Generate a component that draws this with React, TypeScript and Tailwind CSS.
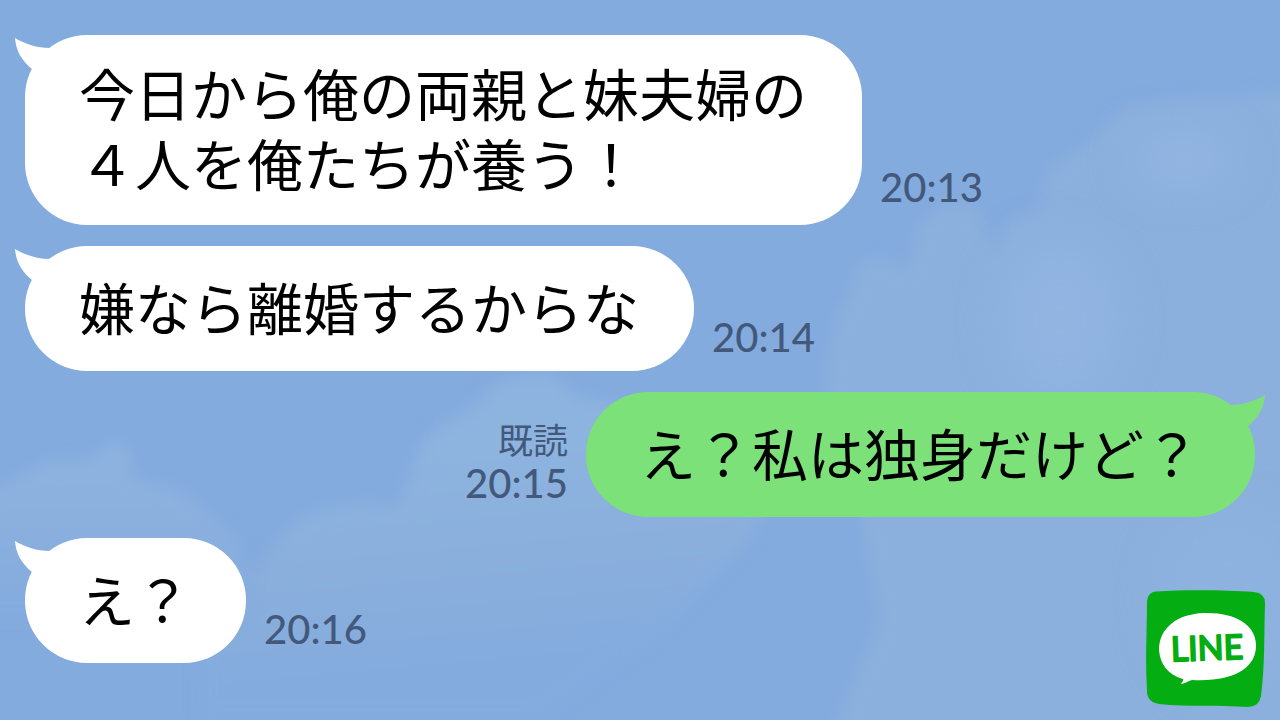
type Side = "in" | "out";

interface Message {
  id: number;
  side: Side;
  text: string;
  time: string;
  read?: boolean;
}

const messages: Message[] = [
  { id: 1, side: "in", text: "今日から俺の両親と妹夫婦の\n４人を俺たちが養う！", time: "20:13" },
  { id: 2, side: "in", text: "嫌なら離婚するからな", time: "20:14" },
  { id: 3, side: "out", text: "え？私は独身だけど？", time: "20:15", read: true },
  { id: 4, side: "in", text: "え？", time: "20:16" },
];

function Sky() {
  return (
    <svg
      className="absolute inset-0 h-full w-full"
      viewBox="0 0 1280 720"
      preserveAspectRatio="xMidYMid slice"
      aria-hidden="true"
    >
      <defs>
        <filter id="soft" x="-10%" y="-10%" width="120%" height="120%" colorInterpolationFilters="sRGB">
          <feGaussianBlur stdDeviation="8" />
        </filter>
        <filter id="haze" x="-80%" y="-80%" width="260%" height="260%" colorInterpolationFilters="sRGB">
          <feGaussianBlur stdDeviation="22" />
        </filter>
        <linearGradient id="leftCloud" gradientUnits="userSpaceOnUse" x1="0" y1="450" x2="0" y2="610">
          <stop offset="0" stopColor="#8eb3df" />
          <stop offset="0.4" stopColor="#8bb0de" />
          <stop offset="1" stopColor="#84abde" />
        </linearGradient>
        <linearGradient id="midCloud" gradientUnits="userSpaceOnUse" x1="400" y1="450" x2="420" y2="675">
          <stop offset="0" stopColor="#8db3df" />
          <stop offset="0.5" stopColor="#8aafdc" />
          <stop offset="1" stopColor="#84abde" />
        </linearGradient>
      </defs>
      <path
        filter="url(#soft)"
        fill="url(#midCloud)"
        d="M200 620 L265 560 L285 530 L310 512 L365 502 L395 508 L408 480 L420 445 L440 425 L475 405 L500 380 L550 372 L575 395 L640 410 L780 480 L750 540 L650 640 L540 720 L200 720 Z"
      />
      <path
        filter="url(#soft)"
        fill="url(#leftCloud)"
        d="M-20 495 L15 478 L45 462 L90 460 L115 440 L128 450 L132 478 L185 492 L210 512 L238 540 L250 580 L240 620 L-20 620 Z"
      />
      <path
        filter="url(#soft)"
        fill="#8bb0dd"
        d="M825 390 L835 320 L850 295 L858 262 L880 258 L908 270 L920 222 L945 203 L975 205 L995 255 L1008 222 L1040 208 L1048 168 L1080 150 L1105 125 L1130 105 L1200 98 L1300 92 L1300 740 L830 740 L850 690 L880 620 L862 520 Z"
      />
      <ellipse filter="url(#haze)" cx="1185" cy="160" rx="50" ry="28" fill="#93b5e2" />
      <ellipse filter="url(#haze)" cx="1060" cy="320" rx="60" ry="80" fill="#91b4e1" />
      <ellipse filter="url(#haze)" cx="1230" cy="600" rx="70" ry="90" fill="#8db2df" />
    </svg>
  );
}

function Tail({ side }: { side: Side }) {
  const incoming = side === "in";
  return (
    <svg
      className={incoming ? "absolute top-0 -left-[10px]" : "absolute top-0 -right-[10px] -scale-x-100"}
      width="50"
      height="40"
      viewBox="0 0 50 40"
      aria-hidden="true"
    >
      <path
        d="M0 3 C10 9 22 13 35 13 L44 24 L24 40 L17 34 C7 26 1 16 0 3 Z"
        fill={incoming ? "#ffffff" : "#7ce178"}
      />
    </svg>
  );
}

function MessageRow({ message }: { message: Message }) {
  const incoming = message.side === "in";
  const multiline = message.text.includes("\n");
  return (
    <li className={incoming ? "flex items-end gap-[18px]" : "flex flex-row-reverse items-end gap-[18px]"}>
      <div
        className={
          incoming
            ? "relative flex min-h-[125px] items-center rounded-[62px] bg-white py-[25px] pr-[55px] pl-[54px]"
            : "relative flex min-h-[125px] items-center rounded-[62px] bg-[#7ce178] py-[25px] pr-[55px] pl-[54px]"
        }
      >
        <Tail side={message.side} />
        <p className="relative text-[56px] leading-[70px] whitespace-pre text-black">{message.text}</p>
      </div>
      <div
        className={
          multiline
            ? "flex flex-col items-end pb-[16px] text-[#43597c]"
            : "flex flex-col items-end pb-[12px] text-[#43597c]"
        }
      >
        {message.read && <span className="text-[35px] leading-[42px]">既読</span>}
        <time className="text-[40px] leading-[44px] font-medium">{message.time}</time>
      </div>
    </li>
  );
}

function LineLogo() {
  return (
    <svg
      className="absolute right-[15px] bottom-[13px]"
      width="119"
      height="117"
      viewBox="0 0 119 117"
      role="img"
      aria-label="LINE"
    >
      <path
        d="M10 1.500 C40 -0.500 80 0 108 2 Q119 3 119 13 C118 45 119 75 115 106 Q113 117 102 117 C72 115 42 117 13 114 Q1 112 1 101 C-1 70 1 40 1 11 Q2 2 10 1.500 Z"
        fill="#04ae12"
      />
      <path
        d="M58 23 C88 22 109 34 110 54 C111 78 88 92 46 90 C42 91 38 94 35 94 C36 92 38 90 37 89 C22 85 14 74 13 60 C13 38 31 24 58 23 Z"
        fill="#ffffff"
      />
      <text
        x="61"
        y="70"
        textAnchor="middle"
        transform="rotate(-2 61 58)"
        fill="#04ae12"
        stroke="#04ae12"
        strokeWidth="2"
        strokeLinejoin="round"
        className="font-['Lato',sans-serif] text-[34px] font-normal"
      >
        LINE
      </text>
    </svg>
  );
}

export default function App() {
  return (
    <main
      lang="ja"
      className="relative min-h-screen overflow-hidden bg-[#84abde] font-['Lato','Noto_Sans_CJK_JP',sans-serif]"
    >
      <Sky />
      <ol className="relative flex flex-col gap-[21px] px-[25px] pt-[35px] pb-[56px]">
        {messages.map((message) => (
          <MessageRow key={message.id} message={message} />
        ))}
      </ol>
      <LineLogo />
    </main>
  );
}
